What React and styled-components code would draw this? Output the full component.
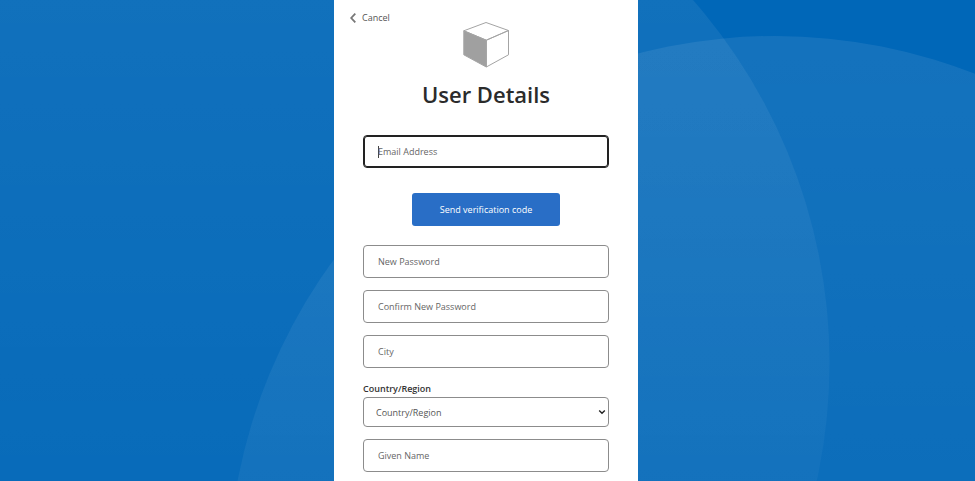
import React, { useState } from 'react';
import styled, { createGlobalStyle, css } from 'styled-components';

const GlobalStyle = createGlobalStyle`
    * {
        box-sizing: border-box;
    }

    body {
        margin: 0;
        background: #0067b8;
        font-family: "Segoe UI", "Open Sans", "Noto Sans", sans-serif;
    }
`;

const Page = styled.div`
    position: relative;
    display: flex;
    justify-content: center;
    min-height: 100vh;
    padding-right: 3px;
`;

const Backdrop = styled.svg`
    position: fixed;
    inset: 0;
    width: 100%;
    height: 100%;
`;

const Panel = styled.main`
    position: relative;
    width: 100%;
    max-width: 304px;
    background: #fff;
`;

const Header = styled.header`
    display: grid;
    grid-template-columns: 1fr auto 1fr;
    align-items: start;
    padding: 10px 16px 0;
`;

const CancelButton = styled.button`
    display: flex;
    align-items: center;
    justify-self: start;
    gap: 6px;
    padding: 0;
    border: none;
    background: none;
    color: #555;
    font: inherit;
    font-size: 9px;
    line-height: 16px;
    cursor: pointer;
`;

const Logo = styled.svg`
    width: 48px;
    height: 48px;
    margin-top: 11px;
`;

const Title = styled.h1`
    margin: 8px 0 24px;
    color: #2b2b2b;
    font-size: 22px;
    font-weight: 600;
    line-height: 34px;
    text-align: center;
`;

const Form = styled.form`
    display: flex;
    flex-direction: column;
    gap: 12px;
    padding: 0 29px 8px;
`;

const control = css`
    width: 100%;
    border: 1px solid #8c8c8c;
    border-radius: 4px;
    background: #fff;
    color: #555;
    font: inherit;
    font-size: 9px;
`;

const TextField = styled.input`
    ${control}
    height: 33px;
    padding: 0 14px;

    &::placeholder {
        color: #666;
        opacity: 1;
    }

    &:focus {
        border-color: #222;
        outline: none;
        box-shadow: inset 0 0 0 1px #222;
    }

    /* steady caret while the field is still empty */
    &:focus:placeholder-shown {
        background: linear-gradient(#444, #444) 14px center / 1px 12px no-repeat #fff;
        caret-color: transparent;
    }
`;

const SendButton = styled.button`
    align-self: center;
    width: 148px;
    height: 33px;
    margin: 13px 0 7px;
    border: none;
    border-radius: 3px;
    background: #296ec6;
    color: #fff;
    font: inherit;
    font-size: 9px;
    cursor: pointer;
`;

const SelectGroup = styled.div`
    display: flex;
    flex-direction: column;
`;

const Label = styled.label`
    color: #333;
    font-size: 9px;
    font-weight: 600;
    line-height: 17px;
`;

const SelectBox = styled.div`
    display: grid;
    align-items: center;

    > * {
        grid-area: 1 / 1;
    }

    > svg {
        justify-self: end;
        margin-right: 3px;
        pointer-events: none;
    }
`;

const Select = styled.select`
    ${control}
    height: 30px;
    padding: 0 12px;
    appearance: none;
`;

const Background = () => (
    <Backdrop viewBox="0 0 975 481" preserveAspectRatio="xMidYMid slice" aria-hidden="true">
        <defs>
            <linearGradient id="fade" x1="0" y1="0" x2="0" y2="1">
                <stop offset="0" stopColor="#fff" stopOpacity="0.08" />
                <stop offset="1" stopColor="#fff" stopOpacity="0" />
            </linearGradient>
        </defs>
        <circle cx="278.5" cy="363" r="551" fill="url(#fade)" />
        <circle cx="775" cy="583" r="547" fill="url(#fade)" />
    </Backdrop>
);

const CubeLogo = () => (
    <Logo viewBox="0 0 48 48" fill="none" stroke="#a4a4a4" strokeLinejoin="round" aria-hidden="true">
        <path d="M1.8 9.8 24.3 19.2V46L1.8 33.8Z" fill="#a0a0a0" />
        <path d="M24 1.5 46.5 9.5 24.3 19.2 1.8 9.8Z" />
        <path d="M24.3 19.2 46.5 9.5V33.8L24.3 46Z" />
    </Logo>
);

const App = () => {
    const [country, setCountry] = useState('');

    return (
        <>
            <GlobalStyle />
            <Page>
                <Background />
                <Panel>
                    <Header>
                        <CancelButton type="button">
                            <svg width="6" height="10" viewBox="0 0 6 10" fill="none" stroke="#777" strokeWidth="1.8" aria-hidden="true">
                                <path d="M5.3.6 1.2 5l4.1 4.4" />
                            </svg>
                            Cancel
                        </CancelButton>
                        <CubeLogo />
                    </Header>
                    <Title>User Details</Title>
                    <Form onSubmit={(e) => e.preventDefault()}>
                        <TextField type="email" placeholder="Email Address" aria-label="Email Address" autoFocus />
                        <SendButton type="button">Send verification code</SendButton>
                        <TextField type="password" placeholder="New Password" aria-label="New Password" />
                        <TextField type="password" placeholder="Confirm New Password" aria-label="Confirm New Password" />
                        <TextField type="text" placeholder="City" aria-label="City" />
                        <SelectGroup>
                            <Label htmlFor="country">Country/Region</Label>
                            <SelectBox>
                                <Select id="country" value={country} onChange={(e) => setCountry(e.target.value)}>
                                    <option value="">Country/Region</option>
                                </Select>
                                <svg width="8" height="6" viewBox="0 0 8 6" fill="none" stroke="#222" strokeWidth="1.4" aria-hidden="true">
                                    <path d="M1.2 1.4 4 4.2l2.8-2.8" />
                                </svg>
                            </SelectBox>
                        </SelectGroup>
                        <TextField type="text" placeholder="Given Name" aria-label="Given Name" />
                    </Form>
                </Panel>
            </Page>
        </>
    );
};

export default App;
